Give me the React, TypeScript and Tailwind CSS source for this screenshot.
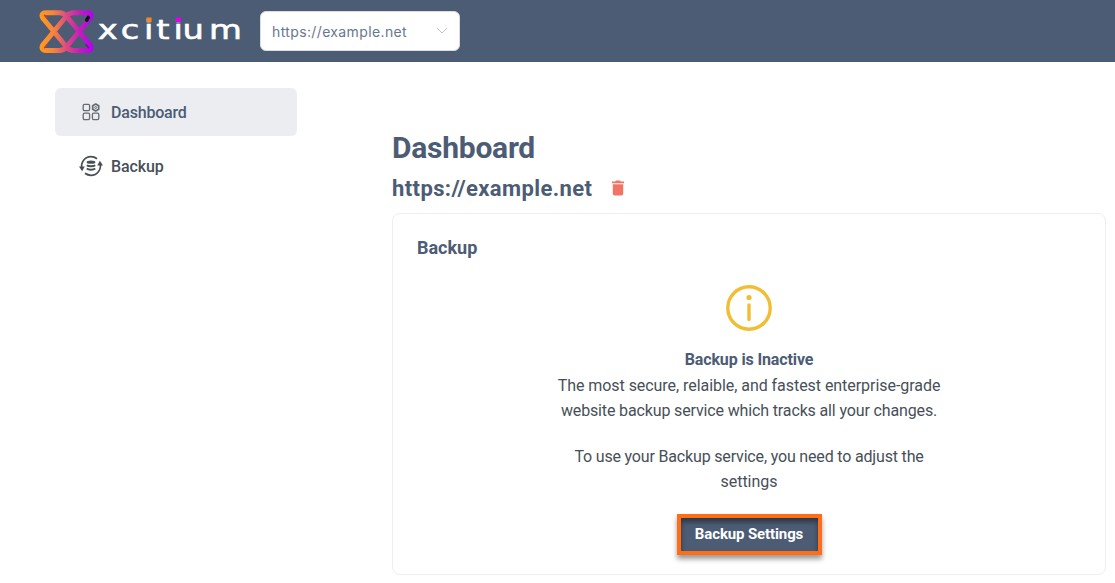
function Logo() {
  return (
    <svg width="206" height="62" viewBox="38 0 206 62" role="img">
      <defs>
        <linearGradient id="brand" gradientUnits="userSpaceOnUse" x1="40" y1="31" x2="93" y2="31">
          <stop offset="0" stopColor="#ff9a1f" />
          <stop offset=".25" stopColor="#f9853a" />
          <stop offset=".5" stopColor="#dc4a83" />
          <stop offset=".75" stopColor="#c01fb8" />
          <stop offset="1" stopColor="#b500f5" />
        </linearGradient>
      </defs>
      <g fill="none" stroke="url(#brand)" strokeWidth="5" strokeLinejoin="round">
        <path d="M46 12.700H59.500Q63.500 12.700 66 15.500L89 43.500C92.500 47.500 91 50.400 87.500 50.400H73.500Q69.500 50.400 67 47.500L44 19.500C40.500 15.500 42 12.700 46 12.700Z" />
        <path d="M87.500 12.700H73.500Q69.500 12.700 67 15.500L44 43.500C40.500 47.500 42 50.400 46 50.400H59.500Q63.500 50.400 66 47.500L89 19.500C92.500 15.500 91 12.700 87.500 12.700Z" />
      </g>
      <path d="M44.500 15.200l2.500 3M44.500 47.700l2.500-3" stroke="#b8452d" strokeWidth="1.400" strokeLinecap="round" />
      <path d="M88.500 47.700l-2.500-3" stroke="#7c0aa5" strokeWidth="1.400" strokeLinecap="round" />
      <path d="M88.300 17.500L86.800 20.200" stroke="#14061c" strokeWidth="3.600" strokeLinecap="round" />
      <text transform="scale(1.25 1)" y="39.500" x="78.200 96.600 115.200 125 138.800 146 167.300" fontFamily="DejaVu Sans, sans-serif" fontSize="27" fill="#fff" stroke="#fff" strokeWidth=".600">xcitium</text>
      <rect x="146.500" y="17.500" width="5" height="4.500" fill="#f58a1f" />
      <rect x="176" y="17.500" width="5" height="4.500" fill="#e000f0" />
    </svg>
  );
}

function DashboardIcon() {
  return (
    <svg width="20" height="20" viewBox="0 0 20 20" fill="none" stroke="#666b72" strokeWidth="1.3">
      <rect x="2.2" y="2.400" width="6.400" height="6.200" rx="1.300" />
      <rect x="2.2" y="11.200" width="6.400" height="6.400" rx="1.300" />
      <rect x="11.400" y="11.200" width="6.400" height="6.400" rx="1.300" />
      <path d="M14.700 2l3 1.700v3.500l-3 1.700-3-1.700V3.700z" strokeWidth="1.700" strokeLinejoin="round" />
      <circle cx="14.700" cy="5.500" r="1" strokeWidth="1" />
    </svg>
  );
}

function BackupIcon() {
  return (
    <svg width="24" height="22" viewBox="0 0 24 22" fill="none" stroke="#474f54">
      <path d="M2.8 13.5C1.6 7.2 5.8 1.7 12 1.7c2.4 0 4.3.7 6 2" strokeWidth="1.7" />
      <path d="M21.2 8.5C22.4 14.8 18.2 20.3 12 20.3c-2.4 0-4.3-.7-6-2" strokeWidth="1.7" />
      <path d="M0 11.600h5.800l-2.700 4.600zM18.200 10.400h5.800L20.900 5.800z" fill="#474f54" stroke="none" />
      <ellipse cx="12" cy="7.2" rx="4.4" ry="1.6" fill="#474f54" stroke="none" />
      <path d="M7.800 10.200c1.700 1.300 6.700 1.300 8.400 0M7.800 13.500c1.700 1.500 6.700 1.500 8.400 0" strokeWidth="2" />
    </svg>
  );
}

export default function App() {
  return (
    <div className="h-[583px] w-[1115px] overflow-hidden bg-white font-['Roboto','Open_Sans',sans-serif] text-[#474f58]">
      <header className="flex h-[62px] items-center bg-[#4b5c74] pl-[38px]">
        <Logo />
        <div className="ml-4 flex h-10 w-[200px] items-center justify-between rounded-md border border-[#d9dce3] bg-white px-[11px]">
          <span className="pt-px font-['Inter',sans-serif] text-[14px] tracking-[0.37px] text-[#68778d]">https://example.net</span>
          <svg width="12" height="8" viewBox="0 0 12 8" fill="none" stroke="#bfc1c5"><path d="M1 1l5 5 5-5" /></svg>
        </div>
      </header>
      <div className="flex">
        <nav className="ml-[55px] mt-[26px] w-[242px] text-[16px] font-medium leading-6">
          <a className="flex h-12 items-center rounded-md bg-[#ecedf1] pl-6 text-[#4b5c74]">
            <span className="flex w-8 justify-start pl-0.5"><DashboardIcon /></span>
            <span className="pt-0.5 tracking-[-0.2px]">Dashboard</span>
          </a>
          <a className="mt-1.5 flex h-12 items-center pl-6">
            <span className="w-8"><BackupIcon /></span>
            <span className="pt-0.5 tracking-[-0.1px]">Backup</span>
          </a>
        </nav>
        <main className="ml-[95px] mt-[66px] w-[714px] text-[#4b5c74]">
          <h1 className="text-[30px] font-bold leading-10 tracking-[-0.25px]">Dashboard</h1>
          <div className="flex h-10 items-center">
            <h2 className="pt-0.5 text-[22px] font-bold leading-10 tracking-[0.39px]">https://example.net</h2>
            <svg className="ml-5" width="12" height="16" viewBox="0 0 12 16" fill="#f07565">
              <path d="M0 1.5h3.3L4 .6h4l.7.9H12v1.7H0zM.8 4.2h10.4v9.6q0 1.7-1.7 1.7h-7q-1.700 0-1.700-1.700z" />
            </svg>
          </div>
          <section className="mt-[5px] flex h-[362px] flex-col items-center rounded-lg border border-[#eeeeef] px-6 pt-[21px] text-center text-[16px] leading-[25px]">
            <h3 className="self-start text-[18px] font-bold">Backup</h3>
            <svg className="mt-[25px]" width="46" height="46" viewBox="0 0 46 46" fill="none" stroke="#f1bd32">
              <circle cx="23" cy="23" r="21.2" strokeWidth="3.4" />
              <path d="M23 20v14.500" strokeWidth="3.400" strokeLinecap="round" />
              <circle cx="23" cy="12.5" r="2.6" fill="#f1bd32" stroke="none" />
            </svg>
            <p className="mt-4 font-bold tracking-[-0.12px]">Backup is Inactive</p>
            <p className="mt-px tracking-[-0.05px] text-[#474f58]">The most secure, relaible, and fastest enterprise-grade</p>
            <p className="tracking-[-0.14px] text-[#474f58]">website backup service which tracks all your changes.</p>
            <p className="mt-[21px] tracking-[-0.17px] text-[#474f58]">To use your Backup service, you need to adjust the</p>
            <p className="text-[#474f58]">settings</p>
            <button className="mt-5 flex h-[41px] w-[145px] items-center justify-center border-4 border-[#ff6d17] bg-[#4b5c74] text-[15px] font-bold tracking-[-0.12px] text-white shadow-[0_4px_5px_rgba(0,0,0,0.4),inset_0_4px_5px_rgba(0,0,0,0.4)]">Backup Settings</button>
          </section>
        </main>
      </div>
    </div>
  );
}
